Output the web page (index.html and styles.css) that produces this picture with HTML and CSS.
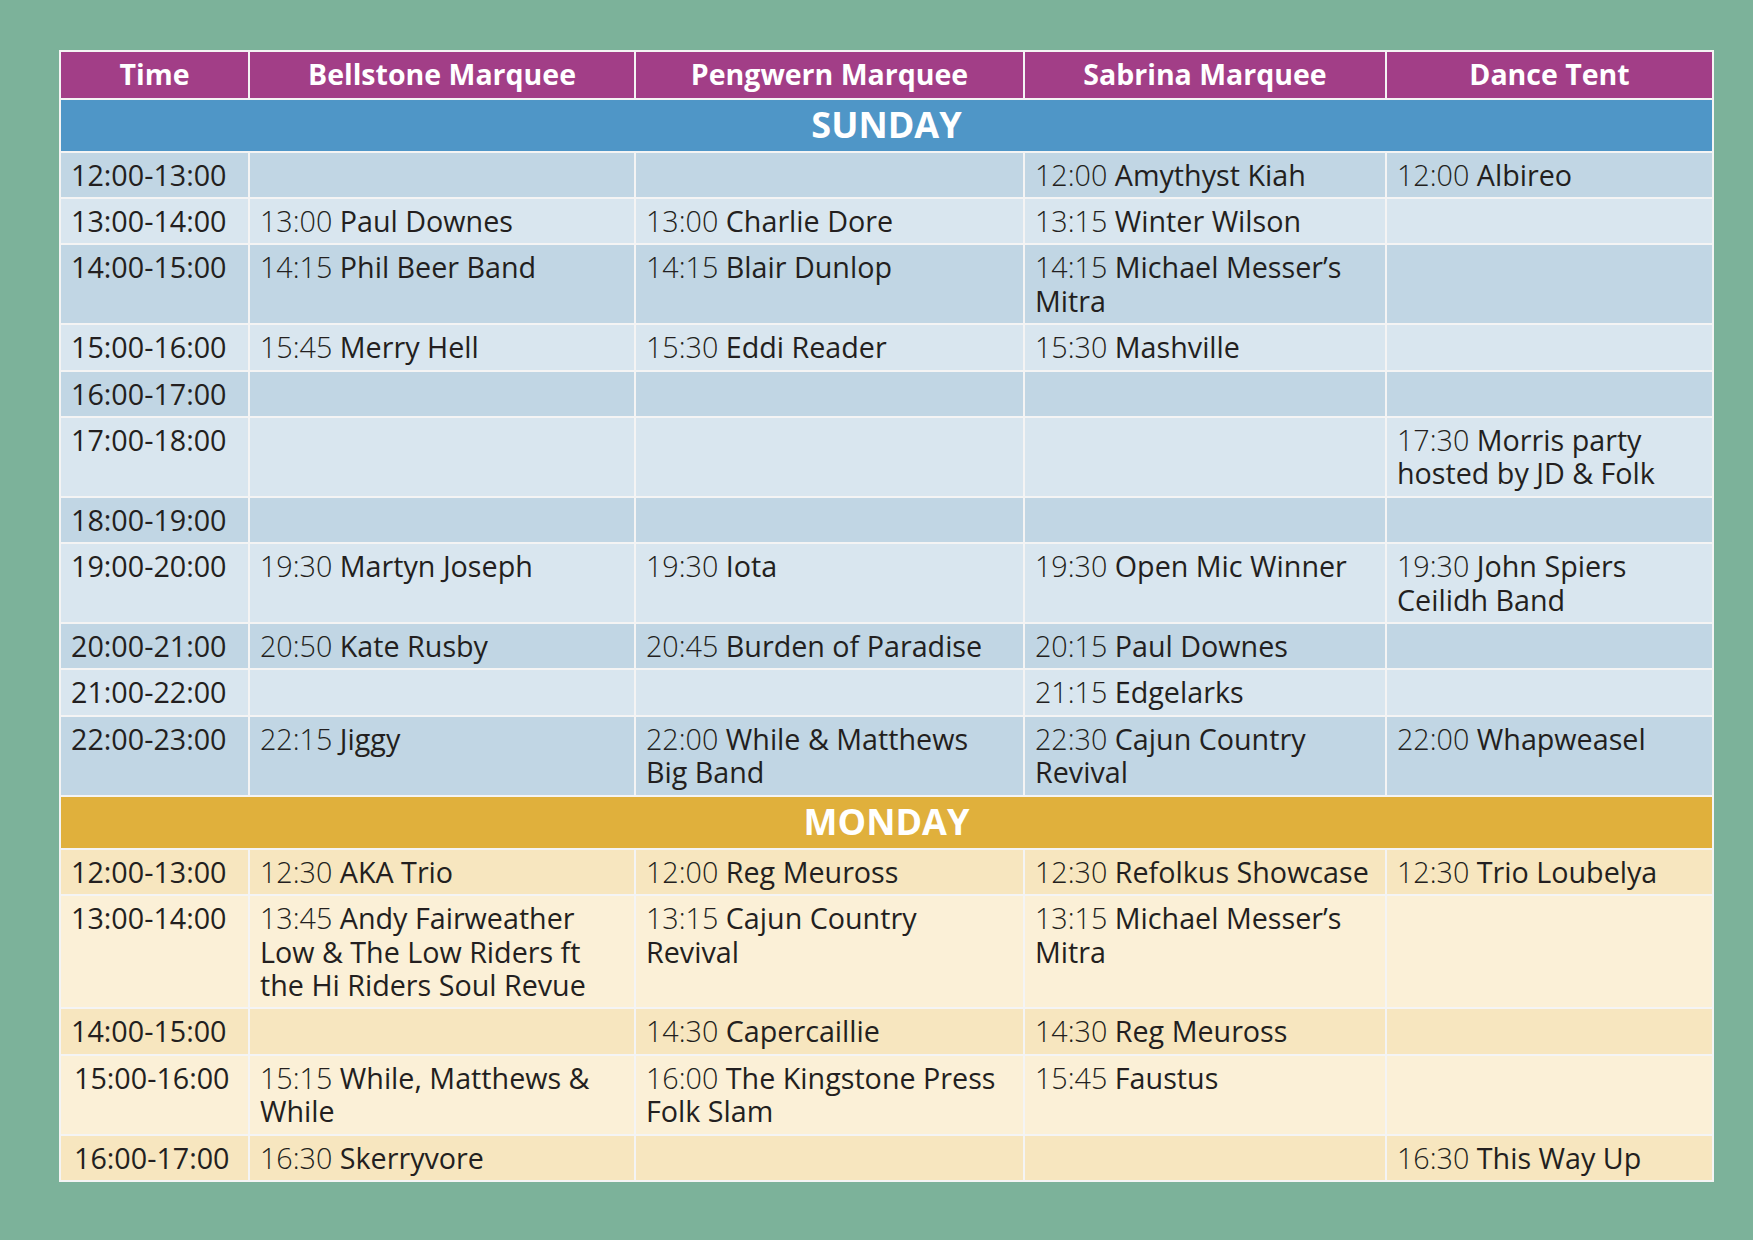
FILE: index.html
```html
<!DOCTYPE html>
<html lang="en">
<head>
<meta charset="utf-8">
<title>Festival Schedule</title>
<link rel="stylesheet" href="styles.css">
</head>
<body>
<div class="page">
<table class="schedule">
  <colgroup>
    <col class="c-time">
    <col class="c-bell">
    <col class="c-peng">
    <col class="c-sab">
    <col class="c-dance">
  </colgroup>
  <thead>
    <tr class="head">
      <th>Time</th>
      <th>Bellstone Marquee</th>
      <th>Pengwern Marquee</th>
      <th>Sabrina Marquee</th>
      <th>Dance Tent</th>
    </tr>
  </thead>
  <tbody class="sunday">
    <tr class="day"><td colspan="5">SUNDAY</td></tr>
    <tr class="dark"><td class="time">12:00-13:00</td><td></td><td></td><td><span class="t">12:00</span> Amythyst Kiah</td><td><span class="t">12:00</span> Albireo</td></tr>
    <tr class="light"><td class="time">13:00-14:00</td><td><span class="t">13:00</span> Paul Downes</td><td><span class="t">13:00</span> Charlie Dore</td><td><span class="t">13:15</span> Winter Wilson</td><td></td></tr>
    <tr class="dark"><td class="time">14:00-15:00</td><td><span class="t">14:15</span> Phil Beer Band</td><td><span class="t">14:15</span> Blair Dunlop</td><td><span class="t">14:15</span> Michael Messer’s<br>Mitra</td><td></td></tr>
    <tr class="light"><td class="time">15:00-16:00</td><td><span class="t">15:45</span> Merry Hell</td><td><span class="t">15:30</span> Eddi Reader</td><td><span class="t">15:30</span> Mashville</td><td></td></tr>
    <tr class="dark"><td class="time">16:00-17:00</td><td></td><td></td><td></td><td></td></tr>
    <tr class="light"><td class="time">17:00-18:00</td><td></td><td></td><td></td><td><span class="t">17:30</span> Morris party<br>hosted by JD &amp; Folk</td></tr>
    <tr class="dark"><td class="time">18:00-19:00</td><td></td><td></td><td></td><td></td></tr>
    <tr class="light"><td class="time">19:00-20:00</td><td><span class="t">19:30</span> Martyn Joseph</td><td><span class="t">19:30</span> Iota</td><td><span class="t">19:30</span> Open Mic Winner</td><td><span class="t">19:30</span> John Spiers<br>Ceilidh Band</td></tr>
    <tr class="dark"><td class="time">20:00-21:00</td><td><span class="t">20:50</span> Kate Rusby</td><td><span class="t">20:45</span> Burden of Paradise</td><td><span class="t">20:15</span> Paul Downes</td><td></td></tr>
    <tr class="light"><td class="time">21:00-22:00</td><td></td><td></td><td><span class="t">21:15</span> Edgelarks</td><td></td></tr>
    <tr class="dark"><td class="time">22:00-23:00</td><td><span class="t">22:15</span> Jiggy</td><td><span class="t">22:00</span> While &amp; Matthews<br>Big Band</td><td><span class="t">22:30</span> Cajun Country<br>Revival</td><td><span class="t">22:00</span> Whapweasel</td></tr>
  </tbody>
  <tbody class="monday">
    <tr class="day"><td colspan="5">MONDAY</td></tr>
    <tr class="dark"><td class="time">12:00-13:00</td><td><span class="t">12:30</span> AKA Trio</td><td><span class="t">12:00</span> Reg Meuross</td><td><span class="t">12:30</span> Refolkus Showcase</td><td><span class="t">12:30</span> Trio Loubelya</td></tr>
    <tr class="light"><td class="time">13:00-14:00</td><td><span class="t">13:45</span> Andy Fairweather<br>Low &amp; The Low Riders ft<br>the Hi Riders Soul Revue</td><td><span class="t">13:15</span> Cajun Country<br>Revival</td><td><span class="t">13:15</span> Michael Messer’s<br>Mitra</td><td></td></tr>
    <tr class="dark"><td class="time">14:00-15:00</td><td></td><td><span class="t">14:30</span> Capercaillie</td><td><span class="t">14:30</span> Reg Meuross</td><td></td></tr>
    <tr class="light"><td class="time indent">15:00-16:00</td><td><span class="t">15:15</span> While, Matthews &amp;<br>While</td><td><span class="t">16:00</span> The Kingstone Press<br>Folk Slam</td><td><span class="t">15:45</span> Faustus</td><td></td></tr>
    <tr class="dark"><td class="time indent">16:00-17:00</td><td><span class="t">16:30</span> Skerryvore</td><td></td><td></td><td><span class="t">16:30</span> This Way Up</td></tr>
  </tbody>
</table>
</div>
</body>
</html>
```

FILE: styles.css
```css
html, body {
  margin: 0;
  padding: 0;
  background: #7cb29a;
}

.page {
  width: 1753px;
  height: 1240px;
  box-sizing: border-box;
  padding: 50px 0 0 59px;
  font-family: "Open Sans", "Noto Sans", "Liberation Sans", sans-serif;
  color: #231f20;
}

.schedule {
  border-collapse: collapse;
  table-layout: fixed;
  width: 1653px;
  border: 2px solid #f4f4f4;
}

.c-time { width: 189px; }
.c-bell { width: 386px; }
.c-peng { width: 389px; }
.c-sab { width: 362px; }
.c-dance { width: 327px; }

.schedule th,
.schedule td {
  border: 2px solid #f4f4f4;
  white-space: nowrap;
  overflow: visible;
}

.head th {
  background: #a23e87;
  color: #ffffff;
  font-weight: 700;
  font-size: 28.5px;
  line-height: 33.6px;
  padding: 6px 0 6px;
  text-align: center;
  vertical-align: middle;
}

.day td {
  color: #ffffff;
  font-weight: 700;
  font-size: 36px;
  line-height: 43px;
  padding: 3px 0 5px;
  text-align: center;
}

.sunday .day td { background: #4f96c7; }
.monday .day td { background: #e0b03c; }

.sunday .dark td { background: #c1d6e4; }
.sunday .light td { background: #d9e6ef; }
.monday .dark td { background: #f7e6bf; }
.monday .light td { background: #fbf0d7; }

.schedule tbody tr:not(.day) td {
  font-size: 28.7px;
  line-height: 33.4px;
  padding: 5px 4px 6px 10px;
  vertical-align: top;
  text-align: left;
  font-weight: 400;
}

.schedule tbody tr:not(.day) td.indent {
  padding-left: 13px;
}

.t {
  font-weight: 300;
}
```
